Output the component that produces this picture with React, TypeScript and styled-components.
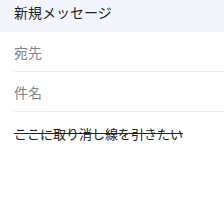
import React from "react";
import styled, { createGlobalStyle } from "styled-components";

const Global = createGlobalStyle`
  html, body { margin: 0; padding: 0; background: #fff; }
  body { font-family: "Noto Sans CJK JP", "Noto Sans", sans-serif; }
`;

const Compose = styled.div`
  width: 224px;
  display: flex;
  flex-direction: column;
`;

const Header = styled.div`
  box-sizing: border-box;
  height: 32px;
  background: #f2f6fc;
  padding: 2px 0 0 14px;
  font-size: 14px;
  line-height: 20px;
  color: #1f1f1f;
`;

const Field = styled.div`
  margin-left: 14px;
  height: 39px;
  display: flex;
  align-items: center;
  border-bottom: 1px solid #ececec;
  font-size: 14px;
  color: #80868b;
`;

const Body = styled.div`
  margin-left: 14px;
  padding-top: 12px;
  font-size: 13px;
  line-height: 19px;
  color: #222;
  text-decoration: line-through;
`;

export default function App() {
  return (
    <>
      <Global />
      <Compose>
        <Header>新規メッセージ</Header>
        <Field>宛先</Field>
        <Field>件名</Field>
        <Body>ここに取り消し線を引きたい</Body>
      </Compose>
    </>
  );
}
